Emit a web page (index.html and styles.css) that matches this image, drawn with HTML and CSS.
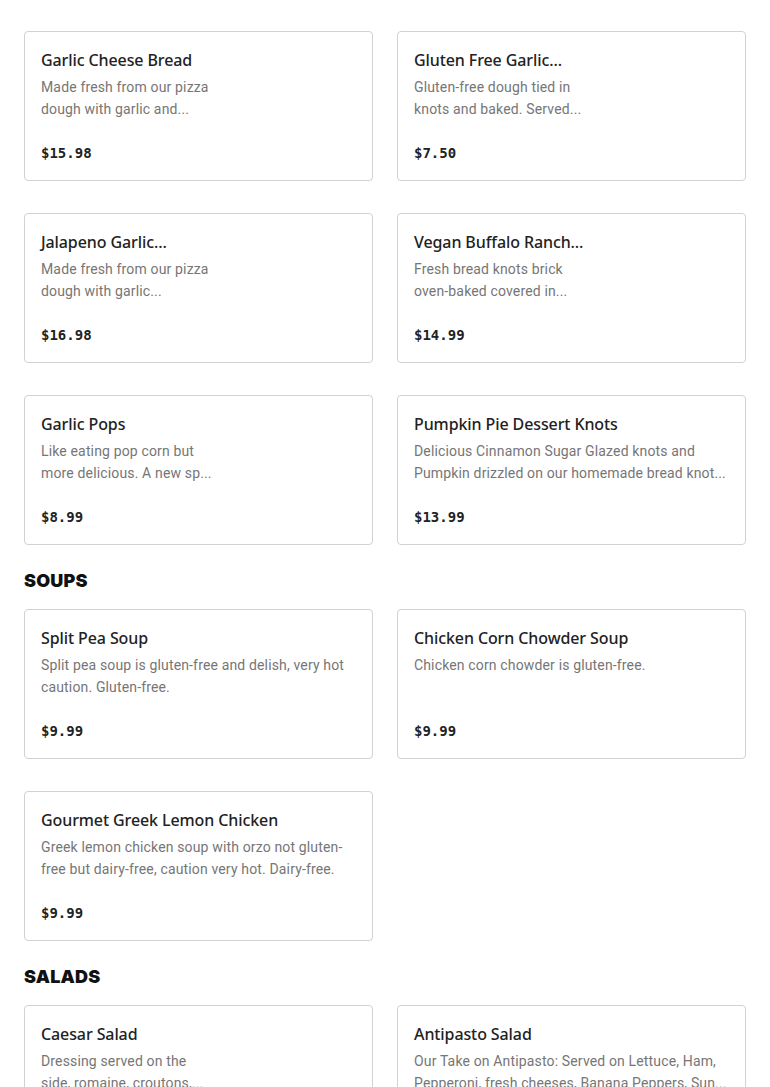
FILE: index.html
```html
<!DOCTYPE html>
<html lang="en">
<head>
<meta charset="utf-8">
<title>Menu</title>
<link rel="stylesheet" href="styles.css">
</head>
<body>
<main class="menu">
  <section class="section">
    <div class="grid">
      <article class="card">
        <h3 class="title narrow">Garlic Cheese Bread</h3>
        <p class="desc narrow">Made fresh from our pizza dough with garlic and...</p>
        <div class="price">$15.98</div>
      </article>
      <article class="card">
        <h3 class="title narrow">Gluten Free Garlic...</h3>
        <p class="desc narrow">Gluten-free dough tied in knots and baked. Served...</p>
        <div class="price">$7.50</div>
      </article>
      <article class="card">
        <h3 class="title narrow">Jalapeno Garlic...</h3>
        <p class="desc narrow">Made fresh from our pizza dough with garlic...</p>
        <div class="price">$16.98</div>
      </article>
      <article class="card">
        <h3 class="title narrow">Vegan Buffalo Ranch...</h3>
        <p class="desc narrow">Fresh bread knots brick oven-baked covered in...</p>
        <div class="price">$14.99</div>
      </article>
      <article class="card">
        <h3 class="title narrow">Garlic Pops</h3>
        <p class="desc narrow">Like eating pop corn but more delicious. A new sp...</p>
        <div class="price">$8.99</div>
      </article>
      <article class="card">
        <h3 class="title">Pumpkin Pie Dessert Knots</h3>
        <p class="desc">Delicious Cinnamon Sugar Glazed knots and Pumpkin drizzled on our homemade bread knot...</p>
        <div class="price">$13.99</div>
      </article>
    </div>
  </section>

  <section class="section">
    <h2 class="heading">SOUPS</h2>
    <div class="grid">
      <article class="card">
        <h3 class="title">Split Pea Soup</h3>
        <p class="desc">Split pea soup is gluten-free and delish, very hot caution. Gluten-free.</p>
        <div class="price">$9.99</div>
      </article>
      <article class="card">
        <h3 class="title">Chicken Corn Chowder Soup</h3>
        <p class="desc">Chicken corn chowder is gluten-free.</p>
        <div class="price">$9.99</div>
      </article>
      <article class="card">
        <h3 class="title">Gourmet Greek Lemon Chicken</h3>
        <p class="desc">Greek lemon chicken soup with orzo not gluten-free but dairy-free, caution very hot. Dairy-free.</p>
        <div class="price">$9.99</div>
      </article>
    </div>
  </section>

  <section class="section">
    <h2 class="heading">SALADS</h2>
    <div class="grid">
      <article class="card">
        <h3 class="title narrow">Caesar Salad</h3>
        <p class="desc narrow">Dressing served on the side, romaine, croutons,...</p>
        <div class="price">$9.99</div>
      </article>
      <article class="card">
        <h3 class="title">Antipasto Salad</h3>
        <p class="desc">Our Take on Antipasto: Served on Lettuce, Ham, Pepperoni, fresh cheeses, Banana Peppers, Sun...</p>
        <div class="price">$12.99</div>
      </article>
    </div>
  </section>
</main>
</body>
</html>
```

FILE: styles.css
```css
* { box-sizing: border-box; }
html, body { margin: 0; padding: 0; background: #fff; }
body {
  font-family: "Noto Sans", "Liberation Sans", sans-serif;
  color: #222;
}
.menu {
  padding: 31px 24px 0;
}
.section + .section { margin-top: 24px; }
.heading {
  margin: 0 0 16px;
  font-family: Inter, "Liberation Sans", sans-serif;
  font-weight: 900;
  font-size: 18px;
  line-height: 24px;
  letter-spacing: 0.2px;
  color: #111;
}
.grid {
  display: grid;
  grid-template-columns: 1fr 1fr;
  column-gap: 24px;
  row-gap: 32px;
}
.card {
  height: 150px;
  border: 1px solid #d2d2d2;
  border-radius: 4px;
  padding: 16px;
  display: flex;
  flex-direction: column;
}
.title {
  margin: 0;
  font-size: 16px;
  line-height: 24px;
  font-weight: 500;
  letter-spacing: -0.1px;
  color: #222;
  white-space: nowrap;
}
.desc {
  margin: 4px 0 0;
  font-family: Roboto, "Noto Sans", sans-serif;
  font-size: 14px;
  line-height: 22px;
  letter-spacing: 0.15px;
  color: #767676;
  hyphens: manual;
}
.narrow { max-width: 172px; }
.price {
  margin-top: auto;
  margin-bottom: 1px;
  font-family: "DejaVu Sans Mono", "Liberation Mono", monospace;
  font-weight: 700;
  font-size: 14px;
  line-height: 20px;
  color: #222;
}
```
